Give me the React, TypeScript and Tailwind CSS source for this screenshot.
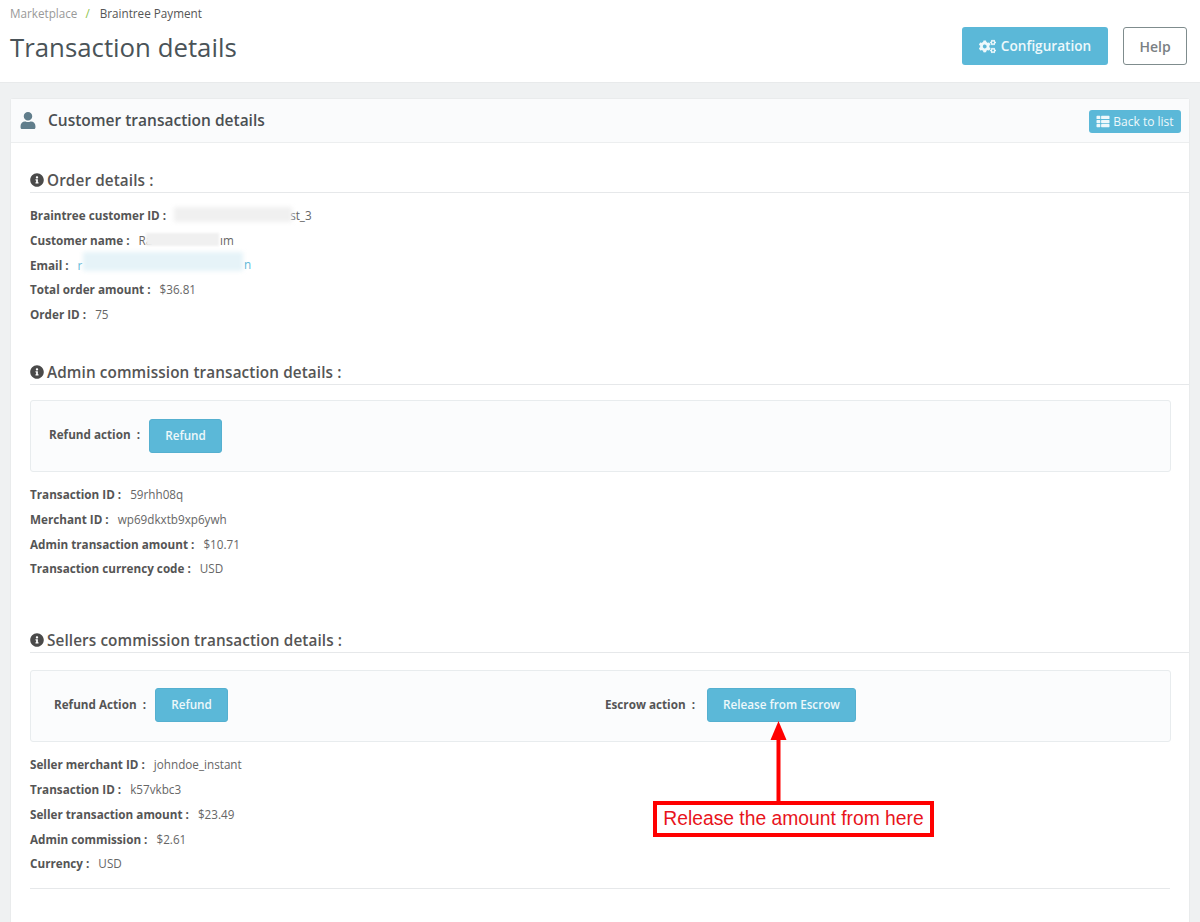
import React from "react";
import { FaUser, FaInfoCircle, FaCogs, FaThList } from "react-icons/fa";

function Row({ label, value, gap = "ml-[9px]" }: { label: string; value: React.ReactNode; gap?: string }) {
  return (
    <div className="h-[24.8px] leading-[24.8px] text-[11.7px] whitespace-nowrap text-[#666]">
      <span className="font-bold text-[#555]">{label}</span>
      <span className={gap}>{value}</span>
    </div>
  );
}

function Heading({ children }: { children: React.ReactNode }) {
  return (
    <div className="ml-[19px] h-[24px] border-b border-[#e6e8ea] flex items-start text-[15.3px] font-semibold text-[#555] leading-[22px] tracking-[0.1px]">
      <FaInfoCircle className="w-[14px] h-[14px] mt-[4px] mr-[3px] text-[#4a4a4a]" />
      <span>{children}</span>
    </div>
  );
}

function Btn({ children, w }: { children: React.ReactNode; w: string }) {
  return (
    <button className={`${w} h-[34px] rounded-[3px] bg-[#5bb8d8] border border-[#55b0d0] text-[#eef8fb] text-[11.7px] font-semibold text-center`}>
      {children}
    </button>
  );
}

function Blur({ className }: { className: string }) {
  return <span className={`absolute blur-[2px] ${className}`} />;
}

export default function App() {
  return (
    <div className="relative w-[1200px] h-[922px] overflow-hidden bg-[#eff1f2] font-['Open_Sans',sans-serif]">
      <header className="h-[83px] bg-white border-b border-[#e8eaeb] flex justify-between px-[10px]">
        <div>
          <div className="pt-[5px] text-[11.7px] leading-[16px] text-[#555]">
            <span className="text-[#999]">Marketplace</span>
            <span className="text-[#8bc34a] mx-[8px]">/</span>
            <span className="ml-[2px]">Braintree Payment</span>
          </div>
          <h1 className="mt-[8px] text-[25.8px] leading-[36px] text-[#4a5358]">Transaction details</h1>
        </div>
        <div className="flex gap-[15px] pt-[27px] pr-[3px] items-start">
          <button className="w-[146px] h-[38px] rounded-[3px] bg-[#5bb8d8] text-[#eef8fb] text-[13.6px] font-semibold flex items-center justify-center gap-[5px]">
            <FaCogs className="w-[17px] h-[17px]" />
            Configuration
          </button>
          <button className="w-[64px] h-[38px] rounded-[3px] bg-white border border-[#7f8c8d] text-[#7a8084] text-[14px] font-semibold">
            Help
          </button>
        </div>
      </header>

      <main className="mx-[10px] mt-[15px] h-[900px] bg-white rounded-t-[3px] border border-[#e9ebec]">
        <div className="h-[44px] bg-[#fafbfc] border-b border-[#eceeef] flex items-center justify-between pl-[9px] pr-[8px]">
          <div className="flex items-center">
            <FaUser className="w-[16px] h-[17px] text-[#607d8b]" />
            <span className="ml-[12px] text-[15.5px] font-semibold text-[#4a4f52]">Customer transaction details</span>
          </div>
          <button className="mt-[2px] w-[92px] h-[23px] rounded-[3px] bg-[#5bb8d8] text-[#eef8fb] text-[12px] flex items-center justify-center gap-[3px]">
            <FaThList className="w-[14px] h-[13px]" />
            Back to list
          </button>
        </div>

        <section className="pt-[26px]">
          <Heading>Order details :</Heading>
          <div className="pl-[19px] pt-[10px] pb-[1px]">
            <Row label="Braintree customer ID :" value={<span className="ml-[115px]">st_3</span>} />
            <Row label="Customer name :" value="Ra" />
            <Row label="Email :" value={<span className="text-[#5bb8d8]">r</span>} />
            <Row label="Total order amount :" value="$36.81" />
            <Row label="Order ID :" value="75" />
          </div>
        </section>

        <section className="pt-[33px]">
          <Heading>Admin commission transaction details :</Heading>
          <div className="mt-[15px] ml-[19px] mr-[18px] h-[72px] rounded-[3px] border border-[#e8ecee] bg-[#fbfcfd] flex items-center pl-[18px]">
            <span className="text-[11.7px] font-bold text-[#555] mr-[9px] -mt-[3px]">Refund action&nbsp; :</span>
            <Btn w="w-[73px]">Refund</Btn>
          </div>
          <div className="pl-[19px] pt-[10px] pb-[1px]">
            <Row label="Transaction ID :" value="59rhh08q" />
            <Row label="Merchant ID :" value="wp69dkxtb9xp6ywh" />
            <Row label="Admin transaction amount :" value="$10.71" />
            <Row label="Transaction currency code :" value="USD" />
          </div>
        </section>

        <section className="pt-[47px]">
          <Heading>Sellers commission transaction details :</Heading>
          <div className="mt-[17px] ml-[19px] mr-[18px] h-[72px] rounded-[3px] border border-[#e8ecee] bg-[#fbfcfd] flex items-center pl-[23px] pb-[2px]">
            <div className="w-[551px] flex items-center">
              <span className="text-[11.7px] font-bold text-[#555] mr-[9px] -mt-[1px]">Refund Action&nbsp; :</span>
              <Btn w="w-[73px]">Refund</Btn>
            </div>
            <span className="text-[11.7px] font-bold text-[#555] mr-[12px] -mt-[1px]">Escrow action&nbsp; :</span>
            <Btn w="w-[149px]">Release from Escrow</Btn>
          </div>
          <div className="pl-[19px] pt-[10px] pb-[1px]">
            <Row label="Seller merchant ID :" value="johndoe_instant" />
            <Row label="Transaction ID :" value="k57vkbc3" />
            <Row label="Seller transaction amount :" value="$23.49" />
            <Row label="Admin commission :" value="$2.61" />
            <Row label="Currency :" value="USD" />
          </div>
          <div className="mx-[19px] mt-[11px] border-b border-[#e6e8ea]" />
        </section>
      </main>

      <Blur className="left-[174px] top-[207px] w-[118px] h-[15px] bg-[#f0f0f0]" />
      <span className="absolute left-[146px] top-[233px] w-[73px] h-[13px] bg-[#f0f0f0] blur-[1px]" />
      <span className="absolute left-[220px] top-[232px] text-[11.7px] leading-[16px] text-[#666]">ım</span>
      <Blur className="left-[83px] top-[252px] w-[160px] h-[19px] bg-[#e6f3f8]" />
      <span className="absolute left-[244px] top-[256px] text-[11.7px] leading-[16px] text-[#5bb8d8]">n</span>

      <div className="absolute left-[770px] top-[721px] w-[17px] h-[80px]">
        <svg viewBox="0 0 17 80" width="17" height="80">
          <polygon points="8.5,0 0.5,19 16.5,19" fill="#ff0000" />
          <rect x="6.5" y="18" width="4" height="62" fill="#ff0000" />
        </svg>
      </div>
      <div className="absolute left-[653px] top-[801px] w-[281px] h-[36px] border-[4px] border-[#ff0000] bg-white flex items-center justify-center font-['Liberation_Sans',sans-serif] text-[19.3px] text-[#e8141c]">
        Release the amount from here
      </div>
    </div>
  );
}
